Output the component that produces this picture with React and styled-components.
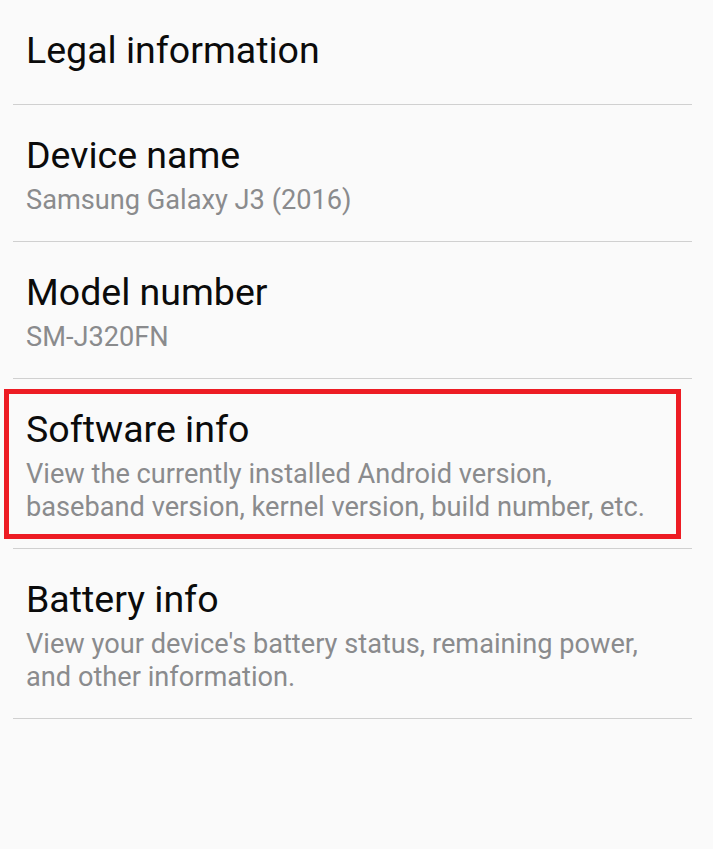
import React from 'react';
import styled, { createGlobalStyle } from 'styled-components';


// global
const GlobalStyle = createGlobalStyle`
  html, body {
    margin: 0;
    padding: 0;
    background: #fafafa;
  }

  body {
    font-family: Roboto, "Noto Sans", "Liberation Sans", sans-serif;
    -webkit-font-smoothing: antialiased;
  }
`


// styled-components
const Screen = styled.div`
  width: 713px;
  min-height: 849px;
  background: #fafafa;
  overflow: hidden;
`

const List = styled.ul`
  list-style: none;
  margin: 0;
  padding: 0 21px 0 13px;
`

const Row = styled.li`
  position: relative;
  padding: 28px 0 ${p => (p.single ? '32px' : '24px')} 13px;
  border-bottom: 1px solid #d0d0d0;
`

const Title = styled.div`
  font-size: 37.5px;
  line-height: 44px;
  color: #0b0b0b;
`

const Summary = styled.div`
  margin-top: 7px;
  font-size: 27.2px;
  line-height: 33px;
  color: #8a8b8d;
`

const Highlight = styled.div`
  position: absolute;
  top: 10px;
  bottom: 9px;
  left: -9px;
  right: 11px;
  border: 5px solid #ed1c24;
  pointer-events: none;
`


const items = [
  { title: 'Legal information' },
  { title: 'Device name', summary: ['Samsung Galaxy J3 (2016)'] },
  { title: 'Model number', summary: ['SM-J320FN'] },
  {
    title: 'Software info',
    summary: [
      'View the currently installed Android version,',
      'baseband version, kernel version, build number, etc.'
    ],
    marked: true
  },
  {
    title: 'Battery info',
    summary: [
      "View your device's battery status, remaining power,",
      'and other information.'
    ]
  }
];


// components
const App = () => {
  return (
    <Screen>
      <GlobalStyle />
      <List>
        {items.map(item => (
          <Row key={item.title} single={!item.summary}>
            <Title>{item.title}</Title>
            {item.summary && (
              <Summary>
                {item.summary.map(line => (
                  <div key={line}>{line}</div>
                ))}
              </Summary>
            )}
            {item.marked && <Highlight />}
          </Row>
        ))}
      </List>
    </Screen>
  );
}


export default App;
